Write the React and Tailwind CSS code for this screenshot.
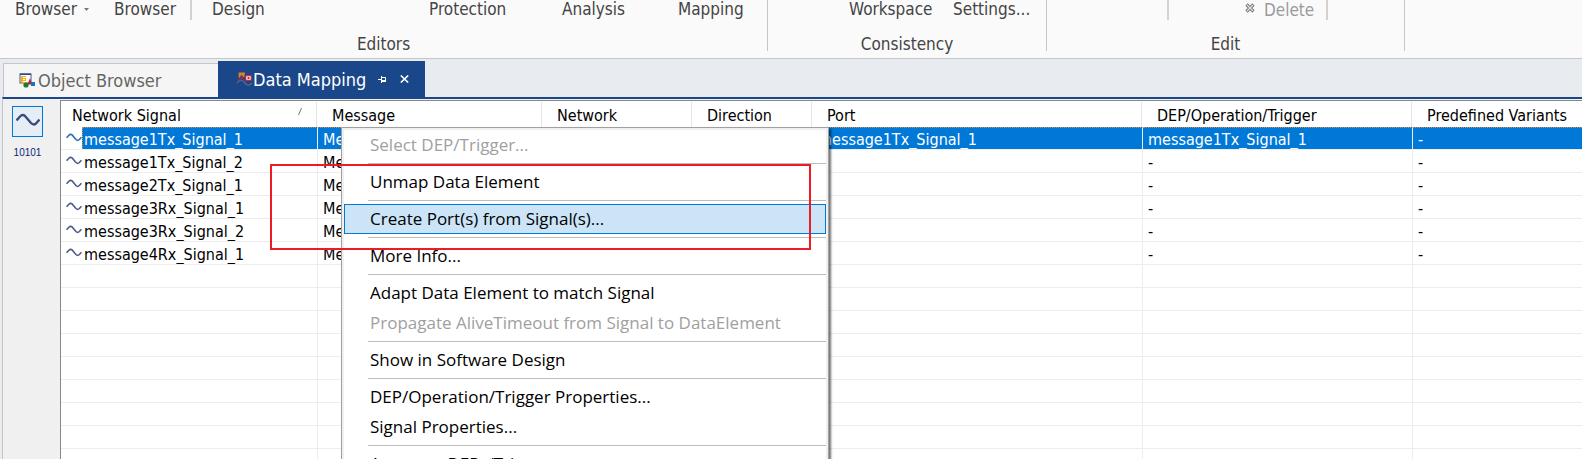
const RIBBON_TEXT = "text-[17px] leading-5 whitespace-nowrap";

function Wave({ className, stroke }) {
  return (
    <svg viewBox="0 0 24 14" className={className} fill="none" stroke={stroke} strokeWidth="2.4" aria-hidden="true">
      <path d="M0.5 7.5 L4 3.5 Q6.5 1 9 3 L15 10 Q17.5 12.5 20 10.5 L23.5 6.5" />
    </svg>
  );
}

function ObjectBrowserIcon() {
  return (
    <svg viewBox="0 0 17 15" className="h-[15px] w-[17px] shrink-0" aria-hidden="true">
      <rect x="1" y="1" width="11" height="9" fill="#fff" stroke="#4a5a8c" />
      <rect x="1" y="0.5" width="11" height="1.5" fill="#33467e" />
      <rect x="2" y="3" width="5" height="7" fill="#f5b312" />
      <rect x="4" y="4" width="3" height="1" fill="#fff" />
      <rect x="4" y="6" width="2" height="1" fill="#fff" />
      <rect x="4" y="8" width="3" height="1" fill="#fff" />
      <path d="M8.5 11.5 L11 5 L13 11.5 Z" fill="#b5232f" />
      <circle cx="7" cy="12" r="2.6" fill="#1e7a2b" />
      <rect x="12" y="9" width="4" height="4" fill="#1c6fc4" />
    </svg>
  );
}

function DataMappingIcon() {
  return (
    <svg viewBox="0 0 17 15" className="h-[15px] w-[17px] shrink-0" aria-hidden="true">
      <path d="M1 11 Q5 5.5 8.5 10.5 T16 11" fill="none" stroke="#5c6486" strokeWidth="1.4" />
      <path d="M3.5 5.5 V1.5 H9 M3.5 2.5 H7.5 V5" fill="none" stroke="#d98324" strokeWidth="1.8" />
      <path d="M2 8 L5 5.5 L8 7" fill="none" stroke="#a82a3a" strokeWidth="1.4" />
      <rect x="9.7" y="3.7" width="5.6" height="4.6" fill="#fff" stroke="#c2263a" strokeWidth="1.2" />
      <rect x="11.5" y="5" width="2" height="2" fill="#d3202f" />
    </svg>
  );
}

function RibbonGroup({ label, width, children }) {
  return (
    <section className={`${width} flex h-[58px] flex-col`} aria-label={label}>
      <div className="flex h-[34px] items-start text-[#444]">{children}</div>
      <div className={`${RIBBON_TEXT} text-center text-[#444]`}>{label}</div>
    </section>
  );
}

function GroupDivider() {
  return <div className="h-[51px] w-px shrink-0 bg-[#c6c6c6]" />;
}

function ShortDivider() {
  return <div className="h-5 w-0.5 shrink-0 bg-[#d2d2d2]" />;
}

function RibbonButton({ children, className }) {
  return <button type="button" className={`text-[17px] leading-[18px] whitespace-nowrap shrink-0 text-left ${className}`}>{children}</button>;
}

function Ribbon() {
  return (
    <header className="flex h-[59px] items-start overflow-hidden border-b border-[#c6c6c6] bg-[#fafafa]">
      <RibbonGroup label="Editors" width="w-[767px] shrink-0">
        <RibbonButton className="ml-[15px] flex w-[99px] items-center gap-[7px]">
          Browser
          <svg viewBox="0 0 5 3" className="h-[3px] w-[5px]" aria-hidden="true"><path d="M0 0H5L2.5 3Z" fill="#777" /></svg>
        </RibbonButton>
        <RibbonButton className="w-[76px]">Browser</RibbonButton>
        <ShortDivider />
        <RibbonButton className="ml-5 w-[217px]">Design</RibbonButton>
        <RibbonButton className="w-[133px]">Protection</RibbonButton>
        <RibbonButton className="w-[116px]">Analysis</RibbonButton>
        <RibbonButton className="">Mapping</RibbonButton>
      </RibbonGroup>
      <GroupDivider />
      <RibbonGroup label="Consistency" width="w-[278px] shrink-0">
        <RibbonButton className="ml-[81px] w-[104px]">Workspace</RibbonButton>
        <RibbonButton className="">Settings...</RibbonButton>
      </RibbonGroup>
      <GroupDivider />
      <RibbonGroup label="Edit" width="w-[357px] shrink-0">
        <div className="w-[120px] shrink-0" />
        <ShortDivider />
        <button type="button" disabled className={`${RIBBON_TEXT} ml-[76px] flex w-[81px] shrink-0 items-center gap-[9px] text-[#9b9b9b]`}>
          <svg viewBox="0 0 10 10" className="mb-1 h-[10px] w-[10px] shrink-0" aria-hidden="true">
            <path d="M1.5 1.5L8.5 8.5M8.5 1.5L1.5 8.5" stroke="#777" strokeWidth="3.2" />
            <path d="M2 2L8 8M8 2L2 8" stroke="#e4e4e4" strokeWidth="1.2" />
          </svg>
          Delete
        </button>
        <ShortDivider />
      </RibbonGroup>
      <GroupDivider />
    </header>
  );
}

function Tabs() {
  return (
    <nav className="flex h-[38px] items-end pl-[3px] text-[18px]" role="tablist">
      <button type="button" role="tab" aria-selected="false" className="flex h-[34px] w-[215px] shrink-0 items-center gap-[2px] border-t border-l border-[#c6c6c6] bg-[#f5f5f5] pl-[15px] text-[#666]">
        <ObjectBrowserIcon />
        Object Browser
      </button>
      <div className="flex h-9 w-[207px] shrink-0 items-center bg-[#1a4789] pl-[18px] text-white">
        <button type="button" role="tab" aria-selected="true" className="flex items-center">
          <DataMappingIcon />
          Data Mapping
        </button>
        <button type="button" aria-label="Pin" className="ml-3">
          <svg viewBox="0 0 8 7" className="h-[7px] w-2" aria-hidden="true">
            <path d="M0 3.5H3M3.5 0V7M3.5 1.5H7.5V4.5" fill="none" stroke="#fff" />
            <path d="M3.5 5H8" stroke="#fff" strokeWidth="2" />
          </svg>
        </button>
        <button type="button" aria-label="Close" className="ml-[14px]">
          <svg viewBox="0 0 9 8" className="h-2 w-[9px]" aria-hidden="true">
            <path d="M0.8 0.5L8.2 7.5M8.2 0.5L0.8 7.5" stroke="#fff" strokeWidth="1.6" />
          </svg>
        </button>
      </div>
    </nav>
  );
}

const ROWS = [
  "message1Tx_Signal_1",
  "message1Tx_Signal_2",
  "message2Tx_Signal_1",
  "message3Rx_Signal_1",
  "message3Rx_Signal_2",
  "message4Rx_Signal_1",
  "", "", "", "", "", "", "", "", "",
];

const HEADERS = ["Network Signal", "Message", "Network", "Direction", "Port", "DEP/Operation/Trigger", "Predefined Variants"];

function SignalTable() {
  return (
    <table className="w-full table-fixed border-separate border-spacing-0 text-[16px] text-black">
      <colgroup>
        <col className="w-[257px]" />
        <col className="w-[225px]" />
        <col className="w-[150px]" />
        <col className="w-[120px]" />
        <col className="w-[330px]" />
        <col className="w-[270px]" />
        <col />
      </colgroup>
      <thead>
        <tr className="h-[26px]">
          {HEADERS.map((h, i) => (
            <th key={h} scope="col" className="p-0 pt-[1px] text-left font-normal">
              <div className={`mr-px flex h-[25px] items-start justify-between leading-7 whitespace-nowrap ${i === 0 ? "pl-[11px]" : "pl-[14px]"} ${i < 6 ? "border-r border-[#e5e5e5]" : ""}`}>
                {h}
                {i === 0 && (
                  <svg viewBox="0 0 4 7" className="mt-[6px] mr-[14px] h-[7px] w-1" aria-hidden="true"><path d="M0.5 7L3.5 0" stroke="#777" fill="none" /></svg>
                )}
              </div>
            </th>
          ))}
        </tr>
      </thead>
      <tbody>
        {ROWS.map((name, i) => {
          const selected = i === 0;
          const fill = selected ? "bg-[#0078d7] leading-6 text-white border-t [border-top-style:dotted] border-t-[#e08a3c]" : "leading-[26px]";
          const cell = "h-[23px] border-b border-[#ededed] p-0";
          const box = `h-[22px] overflow-hidden whitespace-nowrap border-r border-r-[#ededed] ${fill}`;
          return (
            <tr key={i}>
              <td className={cell}>
                <div className="flex h-[22px] items-center pl-[5px]">
                  <span className="flex w-4 shrink-0">
                    {name && <Wave className="mb-0.5 h-[9px] w-4" stroke={selected ? "#2a6cb0" : "#4c5a86"} />}
                  </span>
                  <span className={`${box} flex-1 ${selected ? "border-l border-l-[#e08a3c] pl-px [border-left-style:dotted]" : "pl-[2px]"}`}>{name}</span>
                </div>
              </td>
              <td className={cell}><div className={`${box} pl-[5px]`}>{name && "Message"}</div></td>
              <td className={cell}><div className={box} /></td>
              <td className={cell}><div className={box} /></td>
              <td className={cell}><div className={`${box} pl-[5px]`}>{selected ? name : ""}</div></td>
              <td className={cell}><div className={`${box} pl-[5px]`}>{selected ? name : name && "-"}</div></td>
              <td className={cell}><div className={`h-[22px] pl-[5px] ${fill}`}>{name && "-"}</div></td>
            </tr>
          );
        })}
      </tbody>
    </table>
  );
}

const MENU = [
  { t: "Select DEP/Trigger...", off: true }, null,
  { t: "Unmap Data Element" }, null,
  { t: "Create Port(s) from Signal(s)...", active: true }, null,
  { t: "More Info..." }, null,
  { t: "Adapt Data Element to match Signal" },
  { t: "Propagate AliveTimeout from Signal to DataElement", off: true }, null,
  { t: "Show in Software Design" }, null,
  { t: "DEP/Operation/Trigger Properties..." },
  { t: "Signal Properties..." }, null,
  { t: "Automap DEPs/Triggers..." },
];

function ContextMenu() {
  return (
    <div role="menu" className="absolute top-[127px] left-[341px] w-[488px] border border-[#a0a0a0] bg-[#f0f0f0] p-0.5 font-['Open_Sans','Noto_Sans',sans-serif] text-[17px] shadow-[2px_2px_2px_rgba(0,0,0,0.55)]">
      <div className="bg-white">
        {MENU.map((m, i) =>
          m ? (
            <button
              key={i}
              type="button"
              role="menuitem"
              disabled={m.off}
              className={`flex h-[30px] w-full items-center border pl-[25px] whitespace-nowrap ${m.active ? "border-[#0078d7] bg-[#cce4f7]" : "border-transparent"} ${m.off ? "text-[#a0a0a0]" : "text-black"}`}
            >
              {m.t}
            </button>
          ) : (
            <div key={i} role="separator" className="flex h-[7px] items-center pl-6"><div className="h-px flex-1 bg-[#bdbdbd]" /></div>
          )
        )}
      </div>
    </div>
  );
}

export default function App() {
  return (
    <div className="relative flex h-screen flex-col overflow-hidden bg-[#e8ebf0] font-['DejaVu_Sans_Condensed','Noto_Sans',sans-serif]">
      <Ribbon />
      <Tabs />
      <main className="ml-0.5 flex min-h-0 flex-1 border-t-2 border-l border-t-[#1a4789] border-l-[#c6c6c6] bg-[#f0f0f0]">
        <aside className="flex w-[57px] shrink-0 flex-col items-center pt-[7px] pr-[8px]">
          <button type="button" aria-label="Signals" className="flex h-[31px] w-[31px] items-center justify-center border border-[#0078d7] bg-[#e5eef6]">
            <Wave className="mb-1 h-[14px] w-6" stroke="#3b4a7c" />
          </button>
          <button type="button" className="mt-2 font-['Liberation_Sans',sans-serif] text-[10px] leading-4 text-[#0c1f7a]">10101</button>
        </aside>
        <div className="mt-px min-w-0 flex-1 overflow-hidden border-t border-l border-[#828790] bg-white">
          <SignalTable />
        </div>
      </main>
      <ContextMenu />
      <div className="pointer-events-none absolute top-[164px] left-[270px] h-[86px] w-[541px] border-2 border-[#ed1c24]" />
    </div>
  );
}
